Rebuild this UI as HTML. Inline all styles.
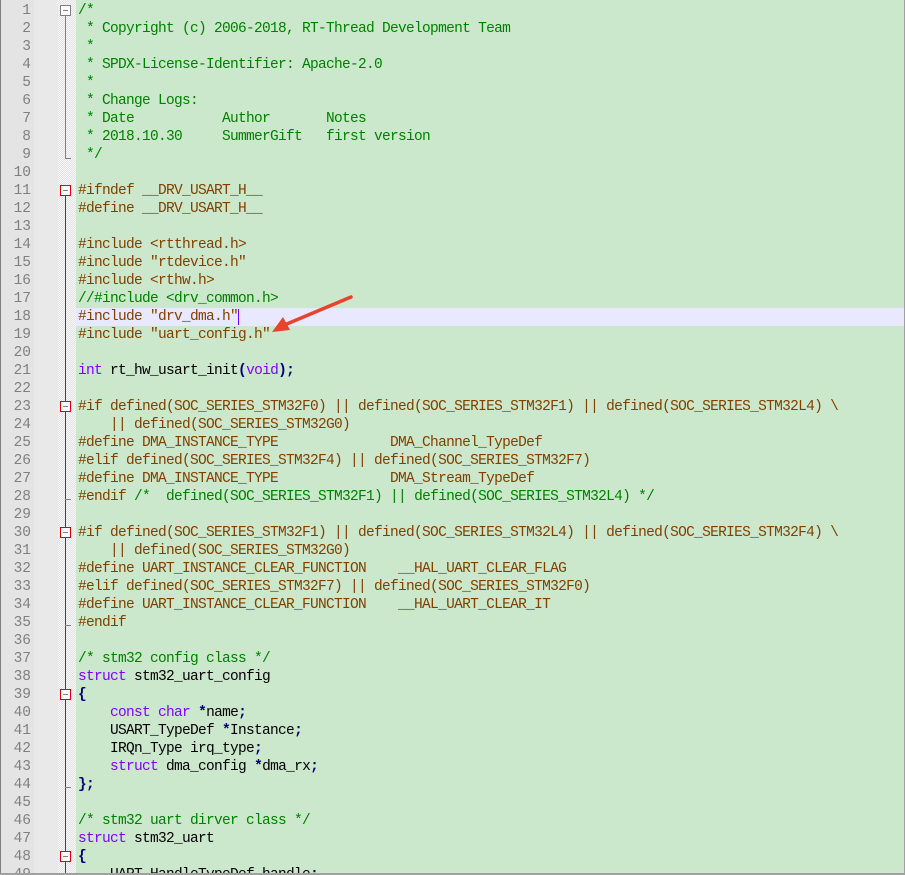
<!DOCTYPE html>
<html><head><meta charset="utf-8"><style>
html,body{margin:0;padding:0;width:905px;height:875px;overflow:hidden;background:#cce8cc;position:relative;}
#g1{position:absolute;left:0;top:0;width:1px;height:875px;background:#808080;}
#g2{position:absolute;left:1px;top:0;width:33px;height:875px;background:#e4e4e4;}
#g3{position:absolute;left:34px;top:0;width:24px;height:875px;background:#e9e9e9;}
#g4{position:absolute;left:58px;top:0;width:18px;height:875px;background-color:#f3f3f3;background-image:repeating-conic-gradient(#e2e2e2 0 25%,#f8f8f8 0 50%);background-size:2px 2px;}
#rb{position:absolute;left:904px;top:0;width:1px;height:875px;background:#a0a0a0;}
#bb{position:absolute;left:0;top:873px;width:905px;height:2px;background:#a0a0a0;}
.hl{position:absolute;left:76px;top:308px;width:828px;height:18px;background:#e8e8ff;}
.r{position:absolute;left:0;height:18px;width:904px;overflow:hidden;font:14.5px/18px "Liberation Mono",monospace;letter-spacing:-0.7px;white-space:pre;}
.n{position:absolute;left:0;width:31px;text-align:right;color:#808080;letter-spacing:0;font-size:14.5px;}
.t{position:absolute;left:78px;color:#000;}
.p{color:#804000}.c{color:#008000}.k{color:#8000ff}.o{color:#000080;font-weight:bold}
.box{position:absolute;left:60px;width:9px;height:9px;border:1px solid #e00000;background:#fff;}
.box:after{content:"";position:absolute;left:2px;top:4px;width:5px;height:1px;background:#808080;}
.vl{position:absolute;left:65px;width:1px;}
.tk{position:absolute;left:65px;width:6px;height:1px;background:#808080;}
</style></head><body>
<div id="g1"></div><div id="g2"></div><div id="g3"></div><div id="g4"></div>
<div class="hl"></div>
<div class="vl" style="top:13px;height:146px;background:#808080"></div>
<div class="tk" style="top:158px"></div>
<div class="vl" style="top:193px;height:682px;background:#e00000"></div>
<div class="tk" style="top:499px"></div>
<div class="tk" style="top:625px"></div>
<div class="tk" style="top:787px"></div>
<div class="box" style="top:5px;border-color:#808080"></div>
<div class="box" style="top:185px"></div>
<div class="box" style="top:401px"></div>
<div class="box" style="top:527px"></div>
<div class="box" style="top:689px"></div>
<div class="box" style="top:851px"></div>
<div class="r" style="top:2px"><span class="n">1</span><span class="t c">/*</span></div>
<div class="r" style="top:20px"><span class="n">2</span><span class="t c"> * Copyright (c) 2006-2018, RT-Thread Development Team</span></div>
<div class="r" style="top:38px"><span class="n">3</span><span class="t c"> *</span></div>
<div class="r" style="top:56px"><span class="n">4</span><span class="t c"> * SPDX-License-Identifier: Apache-2.0</span></div>
<div class="r" style="top:74px"><span class="n">5</span><span class="t c"> *</span></div>
<div class="r" style="top:92px"><span class="n">6</span><span class="t c"> * Change Logs:</span></div>
<div class="r" style="top:110px"><span class="n">7</span><span class="t c"> * Date           Author       Notes</span></div>
<div class="r" style="top:128px"><span class="n">8</span><span class="t c"> * 2018.10.30     SummerGift   first version</span></div>
<div class="r" style="top:146px"><span class="n">9</span><span class="t c"> */</span></div>
<div class="r" style="top:164px"><span class="n">10</span></div>
<div class="r" style="top:182px"><span class="n">11</span><span class="t p">#ifndef __DRV_USART_H__</span></div>
<div class="r" style="top:200px"><span class="n">12</span><span class="t p">#define __DRV_USART_H__</span></div>
<div class="r" style="top:218px"><span class="n">13</span></div>
<div class="r" style="top:236px"><span class="n">14</span><span class="t p">#include &lt;rtthread.h&gt;</span></div>
<div class="r" style="top:254px"><span class="n">15</span><span class="t p">#include "rtdevice.h"</span></div>
<div class="r" style="top:272px"><span class="n">16</span><span class="t p">#include &lt;rthw.h&gt;</span></div>
<div class="r" style="top:290px"><span class="n">17</span><span class="t c">//#include &lt;drv_common.h&gt;</span></div>
<div class="r" style="top:308px"><span class="n">18</span><span class="t p">#include "drv_dma.h"<span style="border-left:1px solid #8000ff"></span></span></div>
<div class="r" style="top:326px"><span class="n">19</span><span class="t p">#include "uart_config.h"</span></div>
<div class="r" style="top:344px"><span class="n">20</span></div>
<div class="r" style="top:362px"><span class="n">21</span><span class="t"><span class="k">int</span> rt_hw_usart_init<span class="o">(</span><span class="k">void</span><span class="o">);</span></span></div>
<div class="r" style="top:380px"><span class="n">22</span></div>
<div class="r" style="top:398px"><span class="n">23</span><span class="t p">#if defined(SOC_SERIES_STM32F0) || defined(SOC_SERIES_STM32F1) || defined(SOC_SERIES_STM32L4) \</span></div>
<div class="r" style="top:416px"><span class="n">24</span><span class="t p">    || defined(SOC_SERIES_STM32G0)</span></div>
<div class="r" style="top:434px"><span class="n">25</span><span class="t p">#define DMA_INSTANCE_TYPE              DMA_Channel_TypeDef</span></div>
<div class="r" style="top:452px"><span class="n">26</span><span class="t p">#elif defined(SOC_SERIES_STM32F4) || defined(SOC_SERIES_STM32F7)</span></div>
<div class="r" style="top:470px"><span class="n">27</span><span class="t p">#define DMA_INSTANCE_TYPE              DMA_Stream_TypeDef</span></div>
<div class="r" style="top:488px"><span class="n">28</span><span class="t"><span class="p">#endif </span><span class="c">/*  defined(SOC_SERIES_STM32F1) || defined(SOC_SERIES_STM32L4) */</span></span></div>
<div class="r" style="top:506px"><span class="n">29</span></div>
<div class="r" style="top:524px"><span class="n">30</span><span class="t p">#if defined(SOC_SERIES_STM32F1) || defined(SOC_SERIES_STM32L4) || defined(SOC_SERIES_STM32F4) \</span></div>
<div class="r" style="top:542px"><span class="n">31</span><span class="t p">    || defined(SOC_SERIES_STM32G0)</span></div>
<div class="r" style="top:560px"><span class="n">32</span><span class="t p">#define UART_INSTANCE_CLEAR_FUNCTION    __HAL_UART_CLEAR_FLAG</span></div>
<div class="r" style="top:578px"><span class="n">33</span><span class="t p">#elif defined(SOC_SERIES_STM32F7) || defined(SOC_SERIES_STM32F0)</span></div>
<div class="r" style="top:596px"><span class="n">34</span><span class="t p">#define UART_INSTANCE_CLEAR_FUNCTION    __HAL_UART_CLEAR_IT</span></div>
<div class="r" style="top:614px"><span class="n">35</span><span class="t p">#endif</span></div>
<div class="r" style="top:632px"><span class="n">36</span></div>
<div class="r" style="top:650px"><span class="n">37</span><span class="t c">/* stm32 config class */</span></div>
<div class="r" style="top:668px"><span class="n">38</span><span class="t"><span class="k">struct</span> stm32_uart_config</span></div>
<div class="r" style="top:686px"><span class="n">39</span><span class="t o">{</span></div>
<div class="r" style="top:704px"><span class="n">40</span><span class="t">    <span class="k">const</span> <span class="k">char</span> <span class="o">*</span>name<span class="o">;</span></span></div>
<div class="r" style="top:722px"><span class="n">41</span><span class="t">    USART_TypeDef <span class="o">*</span>Instance<span class="o">;</span></span></div>
<div class="r" style="top:740px"><span class="n">42</span><span class="t">    IRQn_Type irq_type<span class="o">;</span></span></div>
<div class="r" style="top:758px"><span class="n">43</span><span class="t">    <span class="k">struct</span> dma_config <span class="o">*</span>dma_rx<span class="o">;</span></span></div>
<div class="r" style="top:776px"><span class="n">44</span><span class="t o">};</span></div>
<div class="r" style="top:794px"><span class="n">45</span></div>
<div class="r" style="top:812px"><span class="n">46</span><span class="t c">/* stm32 uart dirver class */</span></div>
<div class="r" style="top:830px"><span class="n">47</span><span class="t"><span class="k">struct</span> stm32_uart</span></div>
<div class="r" style="top:848px"><span class="n">48</span><span class="t o">{</span></div>
<div class="r" style="top:866px;height:7px"><span class="n">49</span><span class="t">    UART_HandleTypeDef handle<span class="o">;</span></span></div>
<svg style="position:absolute;left:0;top:0" width="905" height="875"><line x1="351" y1="297" x2="282" y2="326" stroke="#e8432e" stroke-width="3.5" stroke-linecap="round"/><polygon points="272,332 283,317 290,330" fill="#e8432e"/></svg>
<div id="rb"></div><div id="bb"></div>
</body></html>
